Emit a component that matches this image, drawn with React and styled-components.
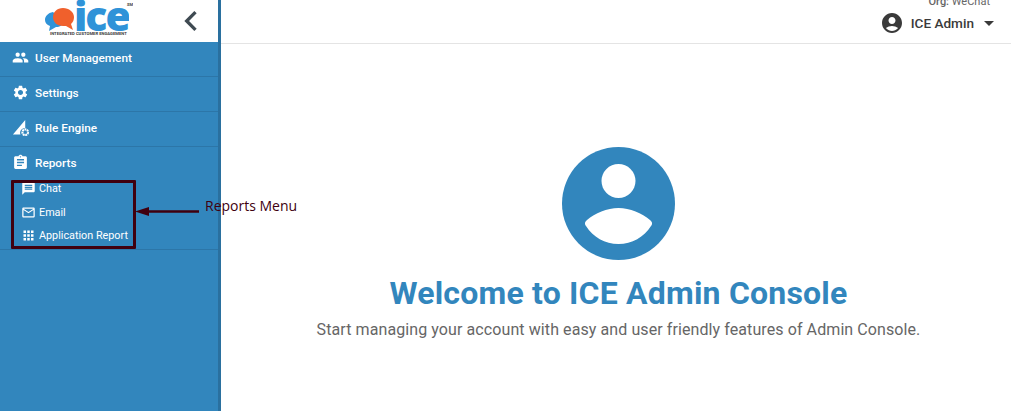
import React from 'react';
import styled, { createGlobalStyle } from 'styled-components';
import { MdPeople, MdSettings, MdAssignment, MdMessage, MdMailOutline, MdApps, MdAccountCircle, MdArrowDropDown, MdChevronLeft } from 'react-icons/md';

const GlobalStyle = createGlobalStyle`
    html, body {
        margin: 0;
        padding: 0;
        height: 100%;
        overflow: hidden;
        background: #fff;
        font-family: Roboto, "Liberation Sans", sans-serif;
    }
    #root {
        height: 100%;
    }
`;

const Page = styled.div`
    display: flex;
    width: 1011px;
    height: 411px;
    position: relative;
    overflow: hidden;
`;

const Sidebar = styled.aside`
    width: 218px;
    flex-shrink: 0;
    background: #3286bd;
    border-right: 3px solid #2a709f;
    color: #fff;
`;

const Brand = styled.div`
    height: 42px;
    background: #fff;
    display: flex;
    align-items: center;
    justify-content: space-between;
    padding: 0 7px 0 45px;
    color: #3f4a52;
`;

const LogoWrap = styled.div`
    width: 88px;
    height: 42px;
    position: relative;
    overflow: hidden;
`;

const LogoBubbles = styled.svg`
    position: absolute;
    left: 0;
    top: 7px;
`;

const LogoWord = styled.span`
    position: absolute;
    left: 29px;
    top: 0;
    height: 31px;
    overflow: hidden;
    font-family: "Open Sans", "DejaVu Sans", sans-serif;
    font-weight: 800;
    font-size: 41px;
    letter-spacing: -2px;
    line-height: 30px;
    color: #2f93d8;
`;

const LogoTag = styled.span`
    position: absolute;
    left: 5px;
    top: 31px;
    font-size: 4.2px;
    font-weight: 700;
    line-height: 5px;
    white-space: nowrap;
    color: #3a3a3a;
`;

const LogoSm = styled.span`
    position: absolute;
    right: 0;
    top: 2px;
    font-size: 4px;
    font-weight: 700;
    color: #444;
`;

const Item = styled.div`
    height: 31px;
    padding: 0 0 3px 12px;
    display: flex;
    align-items: center;
    gap: 6px;
    font-size: 11.8px;
    font-weight: 500;
    border-bottom: 1px solid #2c76a8;
    svg {
        flex-shrink: 0;
    }
`;

const ReportsGroup = styled.div`
    height: 102px;
    border-bottom: 1px solid #2c76a8;
`;

const ReportsHead = styled(Item)`
    border-bottom: none;
    height: 29px;
    padding-top: 1px;
    padding-bottom: 0;
`;

const SubItem = styled.div`
    height: 23.5px;
    display: flex;
    align-items: center;
    gap: 3px;
    padding-left: 21px;
    font-size: 10.8px;
    font-weight: 400;
`;

const Callout = styled.div`
    position: absolute;
    left: 11px;
    top: 180px;
    width: 119px;
    height: 63px;
    border: 3px solid #40000f;
    border-radius: 1px;
`;

const Arrow = styled.svg`
    position: absolute;
    left: 135px;
    top: 205px;
`;

const CalloutLabel = styled.span`
    position: absolute;
    left: 205px;
    top: 197px;
    font-family: "Open Sans", sans-serif;
    font-size: 14px;
    line-height: 18px;
    color: #40000f;
`;

const Main = styled.main`
    flex: 1;
    display: flex;
    flex-direction: column;
`;

const Topbar = styled.header`
    height: 43px;
    border-bottom: 1px solid #e4e4e4;
    display: flex;
    flex-direction: column;
    align-items: flex-end;
    padding-right: 10px;
    overflow: hidden;
`;

const Org = styled.div`
    font-size: 11px;
    line-height: 13px;
    margin-top: -5px;
    margin-right: 11px;
    color: #666;
    b {
        font-weight: 500;
    }
`;

const UserRow = styled.div`
    display: flex;
    align-items: center;
    margin-top: 3px;
    font-size: 13.6px;
    font-weight: 500;
    color: #3a3a3a;
`;

const UserName = styled.span`
    margin: 0 3px 0 7px;
`;

const Welcome = styled.section`
    flex: 1;
    display: flex;
    flex-direction: column;
    align-items: center;
    padding: 103px 0 0 5px;
`;

const Title = styled.h1`
    margin: 11px 0 0;
    font-size: 32px;
    line-height: 44px;
    font-weight: 700;
    letter-spacing: 0.2px;
    color: #3286bd;
`;

const Subtitle = styled.p`
    margin: 5px 0 0;
    font-size: 16px;
    line-height: 20px;
    letter-spacing: 0.09px;
    color: #666;
`;

function Logo() {
    return (
        <LogoWrap>
            <LogoBubbles width="30" height="26" viewBox="0 0 30 26">
                <path d="M8 5C3 6 0 9 0 13c0 3 2 5 5 6l-1 5 7-4c4 0 7-2 8-5z" fill="#2f93d8" />
                <path d="M18 1c-6 0-10 4-10 9s4 9 10 9h3l7 4-2-6c2-2 3-4 3-7 0-5-5-9-11-9z" fill="#f0602c" />
            </LogoBubbles>
            <LogoWord>ice</LogoWord>
            <LogoSm>SM</LogoSm>
            <LogoTag>INTEGRATED CUSTOMER ENGAGEMENT</LogoTag>
        </LogoWrap>
    );
}

function RuleIcon() {
    return (
        <svg width="17" height="17" viewBox="0 0 18 18" fill="#fff">
            <path d="M14 1v8.500a5 5 0 0 0-5 7H1z" />
            <circle cx="14" cy="14" r="3" fill="none" stroke="#fff" strokeWidth="2.200" strokeDasharray="2 0.6" />
        </svg>
    );
}

function AvatarIcon() {
    return (
        <svg width="113" height="113" viewBox="0 0 113 113">
            <circle cx="56.5" cy="56.5" r="56.5" fill="#3286bd" />
            <circle cx="56.5" cy="34" r="17" fill="#fff" />
            <path d="M23 76c0-1 1-2 2-3 8-7 20-12 31.500-12S80 66 88 73c1 1 2 2 2 3 0 1 0 2-1 3-7 11-19 18-32.500 18S31 90 24 79c-1-1-1-2-1-3z" fill="#fff" />
        </svg>
    );
}

export default function App() {
    return (
        <Page>
            <GlobalStyle />
            <Sidebar>
                <Brand>
                    <Logo />
                    <MdChevronLeft size={40} />
                </Brand>
                <Item><MdPeople size={17} />User Management</Item>
                <Item><MdSettings size={17} />Settings</Item>
                <Item><RuleIcon />Rule Engine</Item>
                <ReportsGroup>
                    <ReportsHead><MdAssignment size={17} />Reports</ReportsHead>
                    <SubItem><MdMessage size={15} />Chat</SubItem>
                    <SubItem><MdMailOutline size={15} />Email</SubItem>
                    <SubItem><MdApps size={15} />Application Report</SubItem>
                </ReportsGroup>
            </Sidebar>
            <Main>
                <Topbar>
                    <Org><b>Org:</b> WeChat</Org>
                    <UserRow>
                        <MdAccountCircle size={24} />
                        <UserName>ICE Admin</UserName>
                        <MdArrowDropDown size={24} />
                    </UserRow>
                </Topbar>
                <Welcome>
                    <AvatarIcon />
                    <Title>Welcome to ICE Admin Console</Title>
                    <Subtitle>Start managing your account with easy and user friendly features of Admin Console.</Subtitle>
                </Welcome>
            </Main>
            <Callout />
            <Arrow width="66" height="14" viewBox="0 0 66 14">
                <path d="M64 6.500H12" stroke="#40000f" strokeWidth="2.500" />
                <path d="M0 6.500L14 2v9z" fill="#40000f" />
            </Arrow>
            <CalloutLabel>Reports Menu</CalloutLabel>
        </Page>
    );
}
